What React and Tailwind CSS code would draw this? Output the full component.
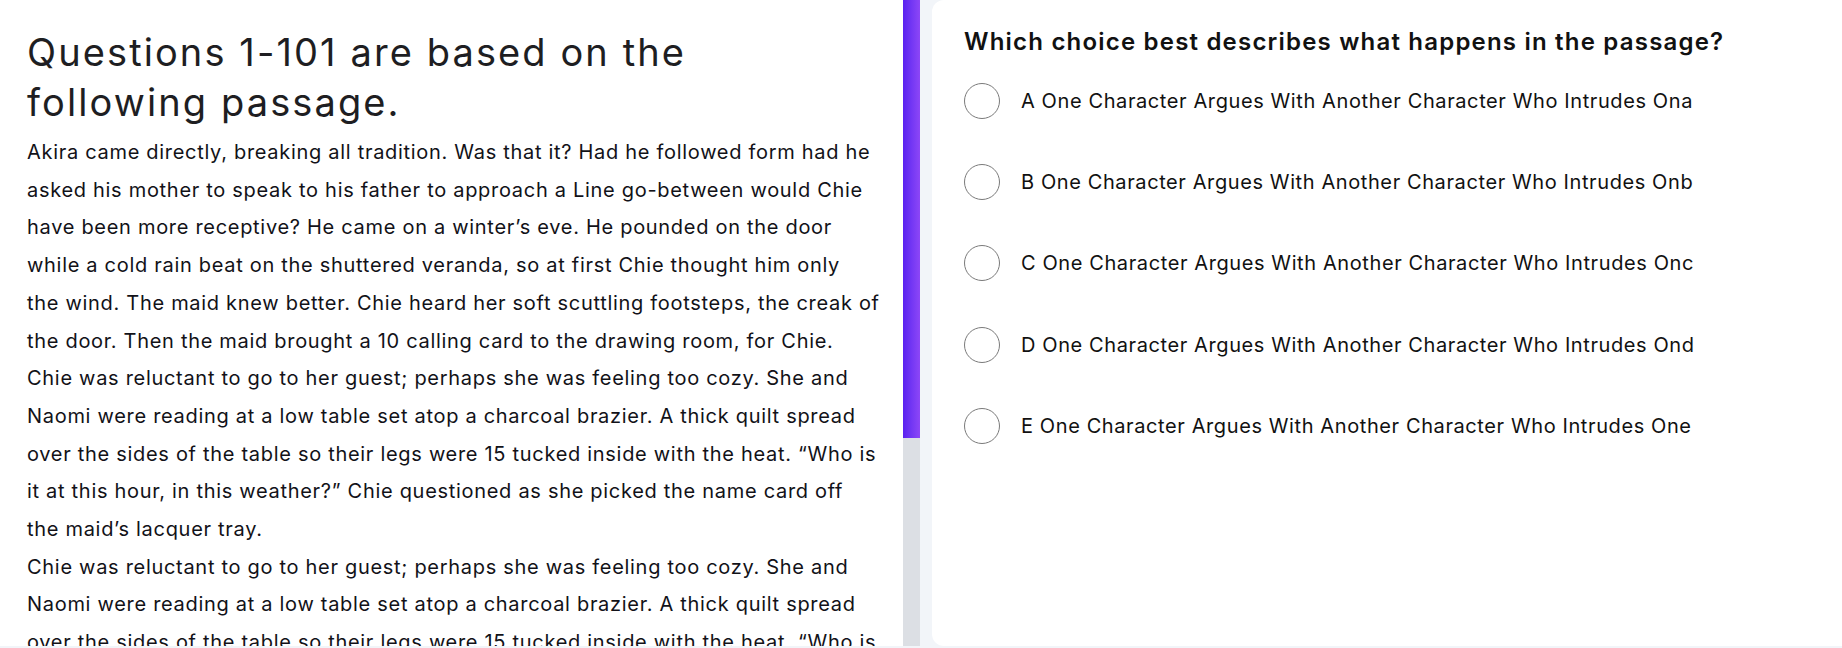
import React from "react";

const P1 = [
  "Akira came directly, breaking all tradition. Was that it? Had he followed form had he",
  "asked his mother to speak to his father to approach a Line go-between would Chie",
  "have been more receptive? He came on a winter’s eve. He pounded on the door",
  "while a cold rain beat on the shuttered veranda, so at first Chie thought him only",
  "the wind. The maid knew better. Chie heard her soft scuttling footsteps, the creak of",
  "the door. Then the maid brought a 10 calling card to the drawing room, for Chie.",
  "Chie was reluctant to go to her guest; perhaps she was feeling too cozy. She and",
  "Naomi were reading at a low table set atop a charcoal brazier. A thick quilt spread",
  "over the sides of the table so their legs were 15 tucked inside with the heat. “Who is",
  "it at this hour, in this weather?” Chie questioned as she picked the name card off",
  "the maid’s lacquer tray.",
];
const P2 = [
  "Chie was reluctant to go to her guest; perhaps she was feeling too cozy. She and",
  "Naomi were reading at a low table set atop a charcoal brazier. A thick quilt spread",
  "over the sides of the table so their legs were 15 tucked inside with the heat. “Who is",
  "it at this hour, in this weather?” Chie questioned as she picked the name card off",
  "the maid’s lacquer tray.",
];

const OPTIONS = ["A", "B", "C", "D", "E"].map(
  (l) => `${l} One Character Argues With Another Character Who Intrudes On${l.toLowerCase()}`
);

export default function App() {
  return (
    <div className="flex h-[648px] w-[1842px] overflow-hidden bg-[#f2f5f9] font-['Inter',sans-serif]">
      <div className="flex h-[646px] w-[920px] shrink-0">
        <div className="h-full w-[903px] overflow-hidden bg-white pl-[27px] pt-[27px]">
          <h1 className="text-[38px] leading-[50px] font-normal tracking-[2.1px] text-[#1e1e22]">
            Questions 1-101 are based on the
            <br />
            following passage.
          </h1>
          <div className="mt-[7px] text-[20px] leading-[37.7px] tracking-[0.7px] text-[#121218]">
            <p>
              {P1.map((l, i) => (
                <span key={i} className="block whitespace-nowrap">{l}</span>
              ))}
            </p>
            <p>
              {P2.map((l, i) => (
                <span key={i} className="block whitespace-nowrap">{l}</span>
              ))}
            </p>
          </div>
        </div>
        <div className="flex h-full w-[17px] flex-col">
          <div className="h-[438px] bg-gradient-to-r from-[#5a1ff0] to-[#8d46f7]" />
          <div className="flex-1 bg-[#dcdfe4]" />
        </div>
      </div>
      <div className="ml-[12px] h-[646px] flex-1 rounded-l-xl bg-white pl-[32px] pt-[26px]">
        <h2 className="text-[24px] leading-[32px] font-semibold tracking-[1.2px] text-[#111]">
          Which choice best describes what happens in the passage?
        </h2>
        <div className="mt-[24.7px] flex flex-col gap-[45.4px]">
          {OPTIONS.map((o) => (
            <div key={o} className="flex h-[36px] items-center gap-[21px]">
              <span className="h-[36px] w-[36px] shrink-0 rounded-full border-[1.5px] border-[#7a7a7a]" />
              <span className="text-[20px] tracking-[0.6px] text-[#111]">{o}</span>
            </div>
          ))}
        </div>
      </div>
    </div>
  );
}
